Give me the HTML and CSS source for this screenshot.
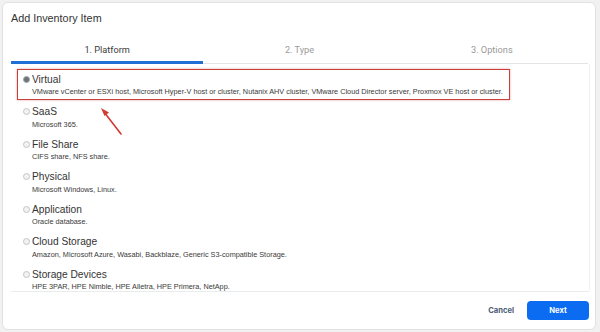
FILE: index.html
```html
<!DOCTYPE html>
<html>
<head>
<meta charset="utf-8">
<link rel="stylesheet" href="styles.css">
</head>
<body>
<div class="dialog">
  <div class="title">Add Inventory Item</div>
  <div class="tabs">
    <div class="tab active">1. Platform</div>
    <div class="tab">2. Type</div>
    <div class="tab">3. Options</div>
  </div>
  <div class="list">
    <div class="item selected">
      <div class="row"><span class="radio on"></span><span class="name">Virtual</span></div>
      <div class="desc">VMware vCenter or ESXi host, Microsoft Hyper-V host or cluster, Nutanix AHV cluster, VMware Cloud Director server, Proxmox VE host or cluster.</div>
    </div>
    <div class="item">
      <div class="row"><span class="radio"></span><span class="name">SaaS</span></div>
      <div class="desc">Microsoft 365.</div>
    </div>
    <div class="item">
      <div class="row"><span class="radio"></span><span class="name">File Share</span></div>
      <div class="desc">CIFS share, NFS share.</div>
    </div>
    <div class="item">
      <div class="row"><span class="radio"></span><span class="name">Physical</span></div>
      <div class="desc">Microsoft Windows, Linux.</div>
    </div>
    <div class="item">
      <div class="row"><span class="radio"></span><span class="name">Application</span></div>
      <div class="desc">Oracle database.</div>
    </div>
    <div class="item">
      <div class="row"><span class="radio"></span><span class="name">Cloud Storage</span></div>
      <div class="desc">Amazon, Microsoft Azure, Wasabi, Backblaze, Generic S3-compatible Storage.</div>
    </div>
    <div class="item">
      <div class="row"><span class="radio"></span><span class="name">Storage Devices</span></div>
      <div class="desc">HPE 3PAR, HPE Nimble, HPE Alletra, HPE Primera, NetApp.</div>
    </div>
    <svg class="arrow" width="30" height="34" viewBox="0 0 30 34">
      <line x1="25" y1="30" x2="8" y2="8" stroke="#d23a32" stroke-width="1.6" stroke-linecap="round"/>
      <polygon points="5,4 13,8.5 8.5,12" fill="#d23a32"/>
    </svg>
  </div>
  <div class="footer">
    <span class="cancel">Cancel</span>
    <span class="next">Next</span>
  </div>
</div>
</body>
</html>
```
FILE: styles.css
```css
html, body {
  margin: 0;
  padding: 0;
  background: #f1f1f1;
}
body {
  width: 600px;
  height: 332px;
  overflow: hidden;
  font-family: "Liberation Sans", Arial, sans-serif;
  color: #333;
}
.dialog {
  box-sizing: border-box;
  margin: 2px 0 0 2px;
  width: 594px;
  height: 328px;
  background: #fff;
  border: 1px solid #e2e2e2;
  border-radius: 6px;
  display: flex;
  flex-direction: column;
  overflow: hidden;
}
.title {
  font-family: "Liberation Sans", Arial, sans-serif;
  font-size: 10.8px;
  color: #333;
  padding: 9px 0 0 8px;
  height: 24px;
  box-sizing: border-box;
}
.tabs {
  display: flex;
  margin: 0 7px 0 8px;
  border-bottom: 1px solid #e4e4e4;
  height: 37px;
  box-sizing: border-box;
}
.tab {
  flex: 1;
  text-align: center;
  font-family: Roboto, "Liberation Sans", sans-serif;
  font-size: 9.2px;
  color: #9a9a9a;
  padding-top: 17px;
  box-sizing: border-box;
}
.tab.active {
  color: #3c3c3c;
  border-bottom: 3px solid #1f6fd6;
  margin-bottom: -1px;
}
.list {
  position: relative;
  flex: 1;
  padding: 5px 0 0 14px;
  display: flex;
  flex-direction: column;
  gap: 2px;
  overflow: hidden;
  margin-right: 5px;
  border-right: 1px solid #f0f0f0;
}
.item {
  align-self: flex-start;
  border: 1.5px solid transparent;
  padding: 2px 6px 1.5px 5px;
}
.item.selected {
  border-color: #c9403b;
  box-shadow: 0 0 2px rgba(201, 64, 59, 0.5);
}
.row {
  display: flex;
  align-items: center;
  height: 14px;
}
.radio {
  width: 5px;
  height: 5px;
  border: 1px solid #c4c4c4;
  border-radius: 50%;
  background: #f2f2f2;
  margin-right: 2px;
}
.radio.on {
  background: #6c7378;
  border-color: #a0a4a8;
}
.name {
  font-size: 10.2px;
  color: #333;
}
.desc {
  font-size: 7.3px;
  color: #3a3a3a;
  line-height: 10px;
  padding-left: 9px;
  margin-top: 1px;
}
.arrow {
  position: absolute;
  left: 93px;
  top: 40px;
}
.footer {
  margin: 0 6px 0 8px;
  border-top: 1px solid #e8ecec;
  height: 37px;
  flex: none;
  display: flex;
  align-items: center;
  justify-content: flex-end;
  gap: 13px;
  font-family: Inter, Roboto, sans-serif;
  font-weight: 700;
  font-size: 7.6px;
}
.cancel {
  color: #4a5b73;
}
.next {
  background: #0b6cf1;
  color: #fff;
  width: 62px;
  height: 19px;
  line-height: 19px;
  text-align: center;
  border-radius: 4px;
}
```
